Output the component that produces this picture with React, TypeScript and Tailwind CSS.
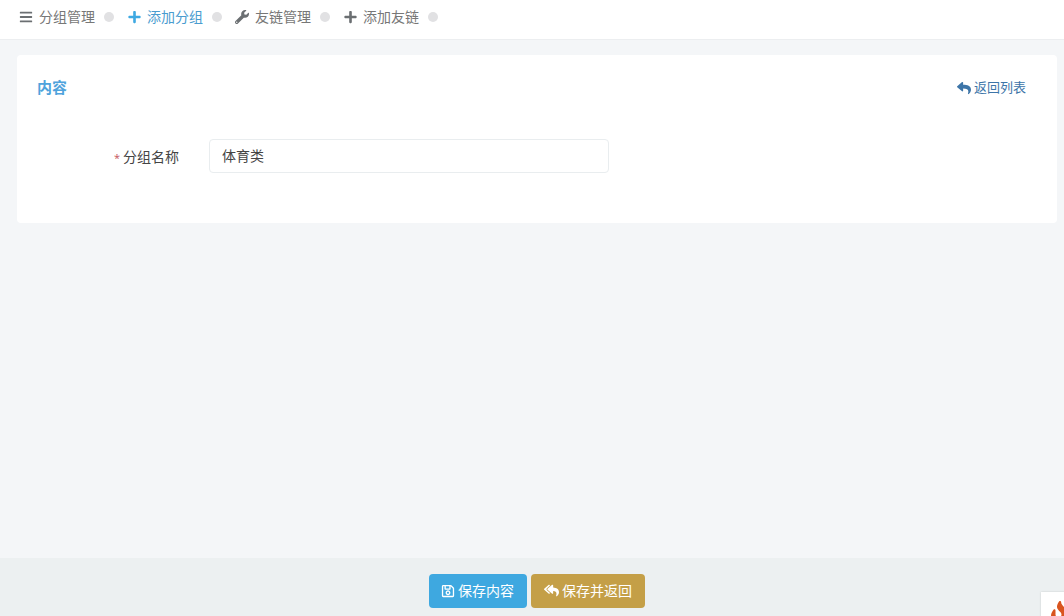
import { FaBars, FaPlus, FaWrench, FaReply, FaReplyAll, FaRegSave, FaFire } from 'react-icons/fa';

const font = { fontFamily: '"Open Sans", "Noto Sans CJK SC", sans-serif' };

function Tab({ icon, label, active, narrow }: { icon: React.ReactNode; label: string; active?: boolean; narrow?: boolean }) {
  return (
    <div className={`flex items-center ${narrow ? 'w-[107px]' : 'w-[109px]'}`}>
      <span className={`flex justify-center text-[14px] ${narrow ? 'w-[13px]' : 'w-[14px]'} ${active ? 'text-[#3ea9e2]' : 'text-[#6b6f72]'}`}>{icon}</span>
      <span className={`ml-[6px] mt-[-2px] text-[14px] ${active ? 'text-[#4a9ccf]' : 'text-[#777]'}`}>{label}</span>
      <span className="ml-[9px] h-[10px] w-[10px] rounded-full bg-[#e1e1e3]" />
    </div>
  );
}

export default function App() {
  return (
    <div className="relative flex h-screen flex-col overflow-hidden bg-[#f4f6f8]" style={font}>
      {/* 顶部标签 */}
      <div className="flex h-[40px] items-center justify-start border-b border-[#eceef0] bg-white pb-[5px] pl-[19px]">
        <Tab icon={<FaBars />} label="分组管理" />
        <Tab icon={<FaPlus />} label="添加分组" active narrow />
        <Tab icon={<FaWrench />} label="友链管理" />
        <Tab icon={<FaPlus />} label="添加友链" narrow />
      </div>

      {/* 内容 */}
      <div className="flex-1 pl-[17px] pr-[7px] pt-[15px]">
        <div className="h-[168px] rounded-[4px] bg-white">
          <div className="flex h-[66px] items-center justify-between pl-[20px] pr-[31px]">
            <span className="mt-[-2px] text-[15px] font-bold text-[#4fa3dc]">内容</span>
            <a className="flex items-center text-[13px] text-[#3d75a8]">
              <FaReply className="mr-[3px] text-[14px]" />
              返回列表
            </a>
          </div>
          <div className="mt-[18px] flex items-center">
            <label className="w-[162px] text-right text-[14px] text-[#444]">
              <span className="mr-[3px] text-[11px] text-[#c5535b]">*</span>分组名称
            </label>
            <input
              readOnly
              value="体育类"
              className="ml-[30px] h-[34px] w-[400px] rounded-[4px] border border-[#e9edef] bg-white px-[12px] pb-[2px] text-[14px] text-[#444] outline-none"
            />
          </div>
        </div>
      </div>

      {/* 底部按钮 */}
      <div className="flex h-[58px] justify-center gap-[4px] bg-[#ecf0f1] pl-[10px] pt-[16px]">
        <button className="flex h-[34px] w-[98px] items-center justify-center rounded-[4px] bg-[#3ea8e0] pb-[2px] pr-[1px] text-[14px] text-white">
          <FaRegSave className="mr-[3px] mt-[2px] text-[14px]" />
          保存内容
        </button>
        <button className="flex h-[34px] w-[114px] items-center justify-center rounded-[4px] bg-[#c49f47] pb-[2px] text-[14px] text-white">
          <FaReplyAll className="mr-[3px] text-[15px]" />
          保存并返回
        </button>
      </div>

      {/* 右下角浮标 */}
      <div className="absolute left-[1041px] top-[592px] h-[40px] w-[40px] bg-white pl-[7px] pt-[9px] shadow-[0_0_2px_rgba(0,0,0,0.15)]">
        <FaFire className="text-[24px] text-[#d9541e]" />
      </div>
    </div>
  );
}
